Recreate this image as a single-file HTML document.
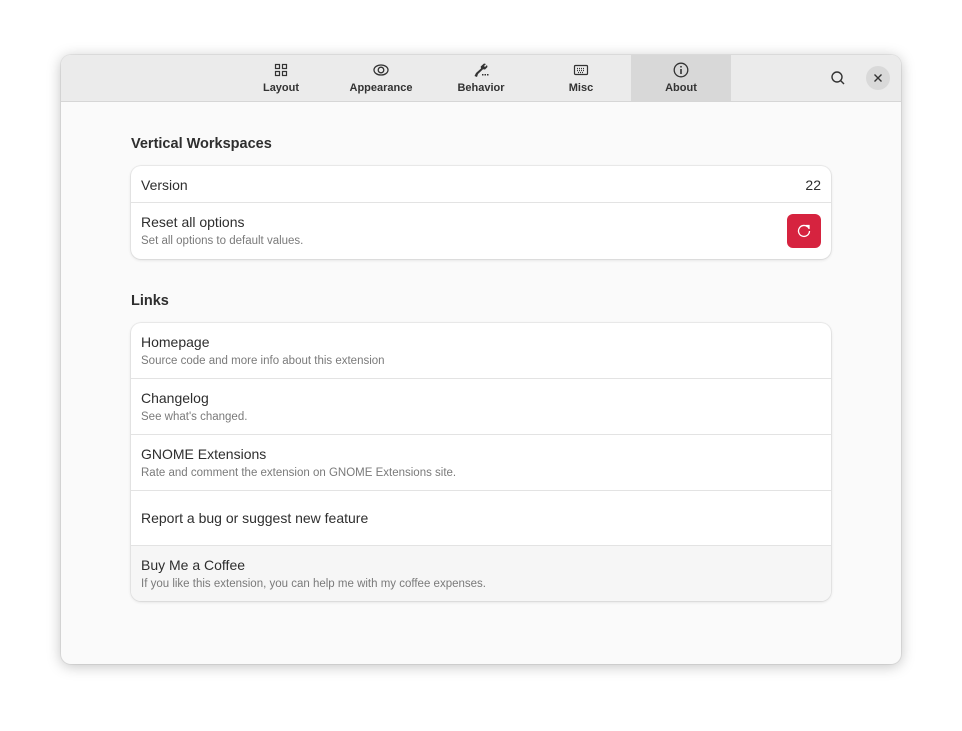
<!DOCTYPE html>
<html><head><meta charset="utf-8"><style>
*{box-sizing:border-box;margin:0;padding:0}
body{width:962px;height:731px;background:#fff;font-family:"Liberation Sans","DejaVu Sans",sans-serif;position:relative;overflow:hidden;color:#2e2e2e}
.win{position:absolute;left:61px;top:55px;width:840px;height:609px;background:#fafafa;border-radius:10px;box-shadow:0 2px 14px rgba(0,0,0,.25),0 0 0 1px rgba(0,0,0,.06);overflow:hidden}
.hdr{position:absolute;left:0;top:0;width:840px;height:47px;background:#ebebeb;border-bottom:1px solid #d6d6d6}
.tab{position:absolute;top:0;width:100px;height:46px;text-align:center}
.tab svg{position:absolute;left:42px;top:7px}
.tab span{position:absolute;left:0;right:0;top:27px;font-size:11px;font-weight:bold;color:#333}
.tab.on{background:#d8d8d8}
.title{position:absolute;left:70px;font-size:14.5px;font-weight:bold;color:#2e2e2e}
.card{position:absolute;left:70px;width:700px;background:#fff;border-radius:10px;box-shadow:0 0 0 1px rgba(0,0,0,.05),0 1px 3px rgba(0,0,0,.12);overflow:hidden}
.row{position:relative;border-bottom:1px solid #e3e3e3;padding-left:10px}
.row:last-child{border-bottom:none}
.t{font-size:14px;color:#2e2e2e;position:absolute;left:10px}
.s{font-size:11.5px;color:#7a7a7a;position:absolute;left:10px}
</style></head><body>
<div class="win">
<div class="hdr">
 <div class="tab" style="left:170px"><svg width="16" height="16" viewBox="0 0 16 16" fill="none" stroke="#333" stroke-width="1.2"><rect x="2.5" y="2.5" width="4" height="4"/><rect x="9.5" y="2.5" width="4" height="4"/><rect x="2.5" y="9.5" width="4" height="4"/><rect x="9.5" y="9.5" width="4" height="4"/></svg><span>Layout</span></div>
 <div class="tab" style="left:270px"><svg width="16" height="16" viewBox="0 0 16 16" fill="none" stroke="#333" stroke-width="1.3"><ellipse cx="8" cy="8" rx="7" ry="5"/><circle cx="8" cy="8" r="2.8"/></svg><span>Appearance</span></div>
 <div class="tab" style="left:370px"><svg width="16" height="16" viewBox="0 0 16 16" fill="#333"><path d="M11 1.5l2 .5-2 2 1 1 2-2 .5 2-2.5 2.5-2-.3L5 12l-1 3-2.5-1L3 11l5-4.5-.3-2z"/><rect x="9" y="12" width="1.5" height="1.5"/><rect x="11.5" y="12" width="1.5" height="1.5"/><rect x="14" y="12" width="1.5" height="1.5"/></svg><span>Behavior</span></div>
 <div class="tab" style="left:470px"><svg width="16" height="16" viewBox="0 0 16 16" fill="none" stroke="#333" stroke-width="1.2"><rect x="1.5" y="3.5" width="13" height="9" rx="1"/><path d="M4 6.5h8M4 8.5h8M5 10.5h6" stroke-dasharray="1 1"/></svg><span>Misc</span></div>
 <div class="tab on" style="left:570px"><svg width="16" height="16" viewBox="0 0 16 16" fill="none" stroke="#333" stroke-width="1.3"><circle cx="8" cy="8" r="6.8"/><path d="M8 7v5" stroke-width="1.6"/><circle cx="8" cy="4.8" r=".9" fill="#333" stroke="none"/></svg><span>About</span></div>
 <svg style="position:absolute;left:769px;top:15px" width="16" height="16" viewBox="0 0 16 16" fill="none" stroke="#333" stroke-width="1.4"><circle cx="7" cy="7" r="5"/><path d="M10.5 10.5l3.5 3.5"/></svg>
 <div style="position:absolute;left:805px;top:11px;width:24px;height:24px;border-radius:50%;background:#d9d9d9"></div>
 <svg style="position:absolute;left:812px;top:18px" width="10" height="10" viewBox="0 0 10 10" stroke="#333" stroke-width="1.4"><path d="M1.5 1.5l7 7M8.5 1.5l-7 7"/></svg>
</div>
<div class="title" style="top:81px">Vertical Workspaces</div>
<div class="card" style="top:111px;height:93px">
 <div class="row" style="height:37px"><div class="t" style="top:11px">Version</div><div style="position:absolute;right:10px;top:11px;font-size:14px">22</div></div>
 <div class="row" style="height:56px"><div class="t" style="top:11px">Reset all options</div><div class="s" style="top:32px">Set all options to default values.</div>
  <div style="position:absolute;right:10px;top:11px;width:34px;height:34px;border-radius:6px;background:#d6233f"><svg style="position:absolute;left:9px;top:9px" width="16" height="16" viewBox="0 0 16 16" fill="none" stroke="#fff" stroke-width="1.3"><path d="M13.5 8A5.5 5.5 0 1 1 11.5 3.7"/><path d="M9.5 2.5h3.5v3.5" fill="#fff"/></svg></div></div>
</div>
<div class="title" style="top:238px">Links</div>
<div class="card" style="top:268px;height:278px">
 <div class="row" style="height:56px"><div class="t" style="top:11px">Homepage</div><div class="s" style="top:32px">Source code and more info about this extension</div></div>
 <div class="row" style="height:56px"><div class="t" style="top:11px">Changelog</div><div class="s" style="top:32px">See what's changed.</div></div>
 <div class="row" style="height:56px"><div class="t" style="top:11px">GNOME Extensions</div><div class="s" style="top:32px">Rate and comment the extension on GNOME Extensions site.</div></div>
 <div class="row" style="height:55px"><div class="t" style="top:19px">Report a bug or suggest new feature</div></div>
 <div class="row" style="height:55px;background:#f6f6f6"><div class="t" style="top:11px">Buy Me a Coffee</div><div class="s" style="top:32px">If you like this extension, you can help me with my coffee expenses.</div></div>
</div>
</div>
</body></html>
